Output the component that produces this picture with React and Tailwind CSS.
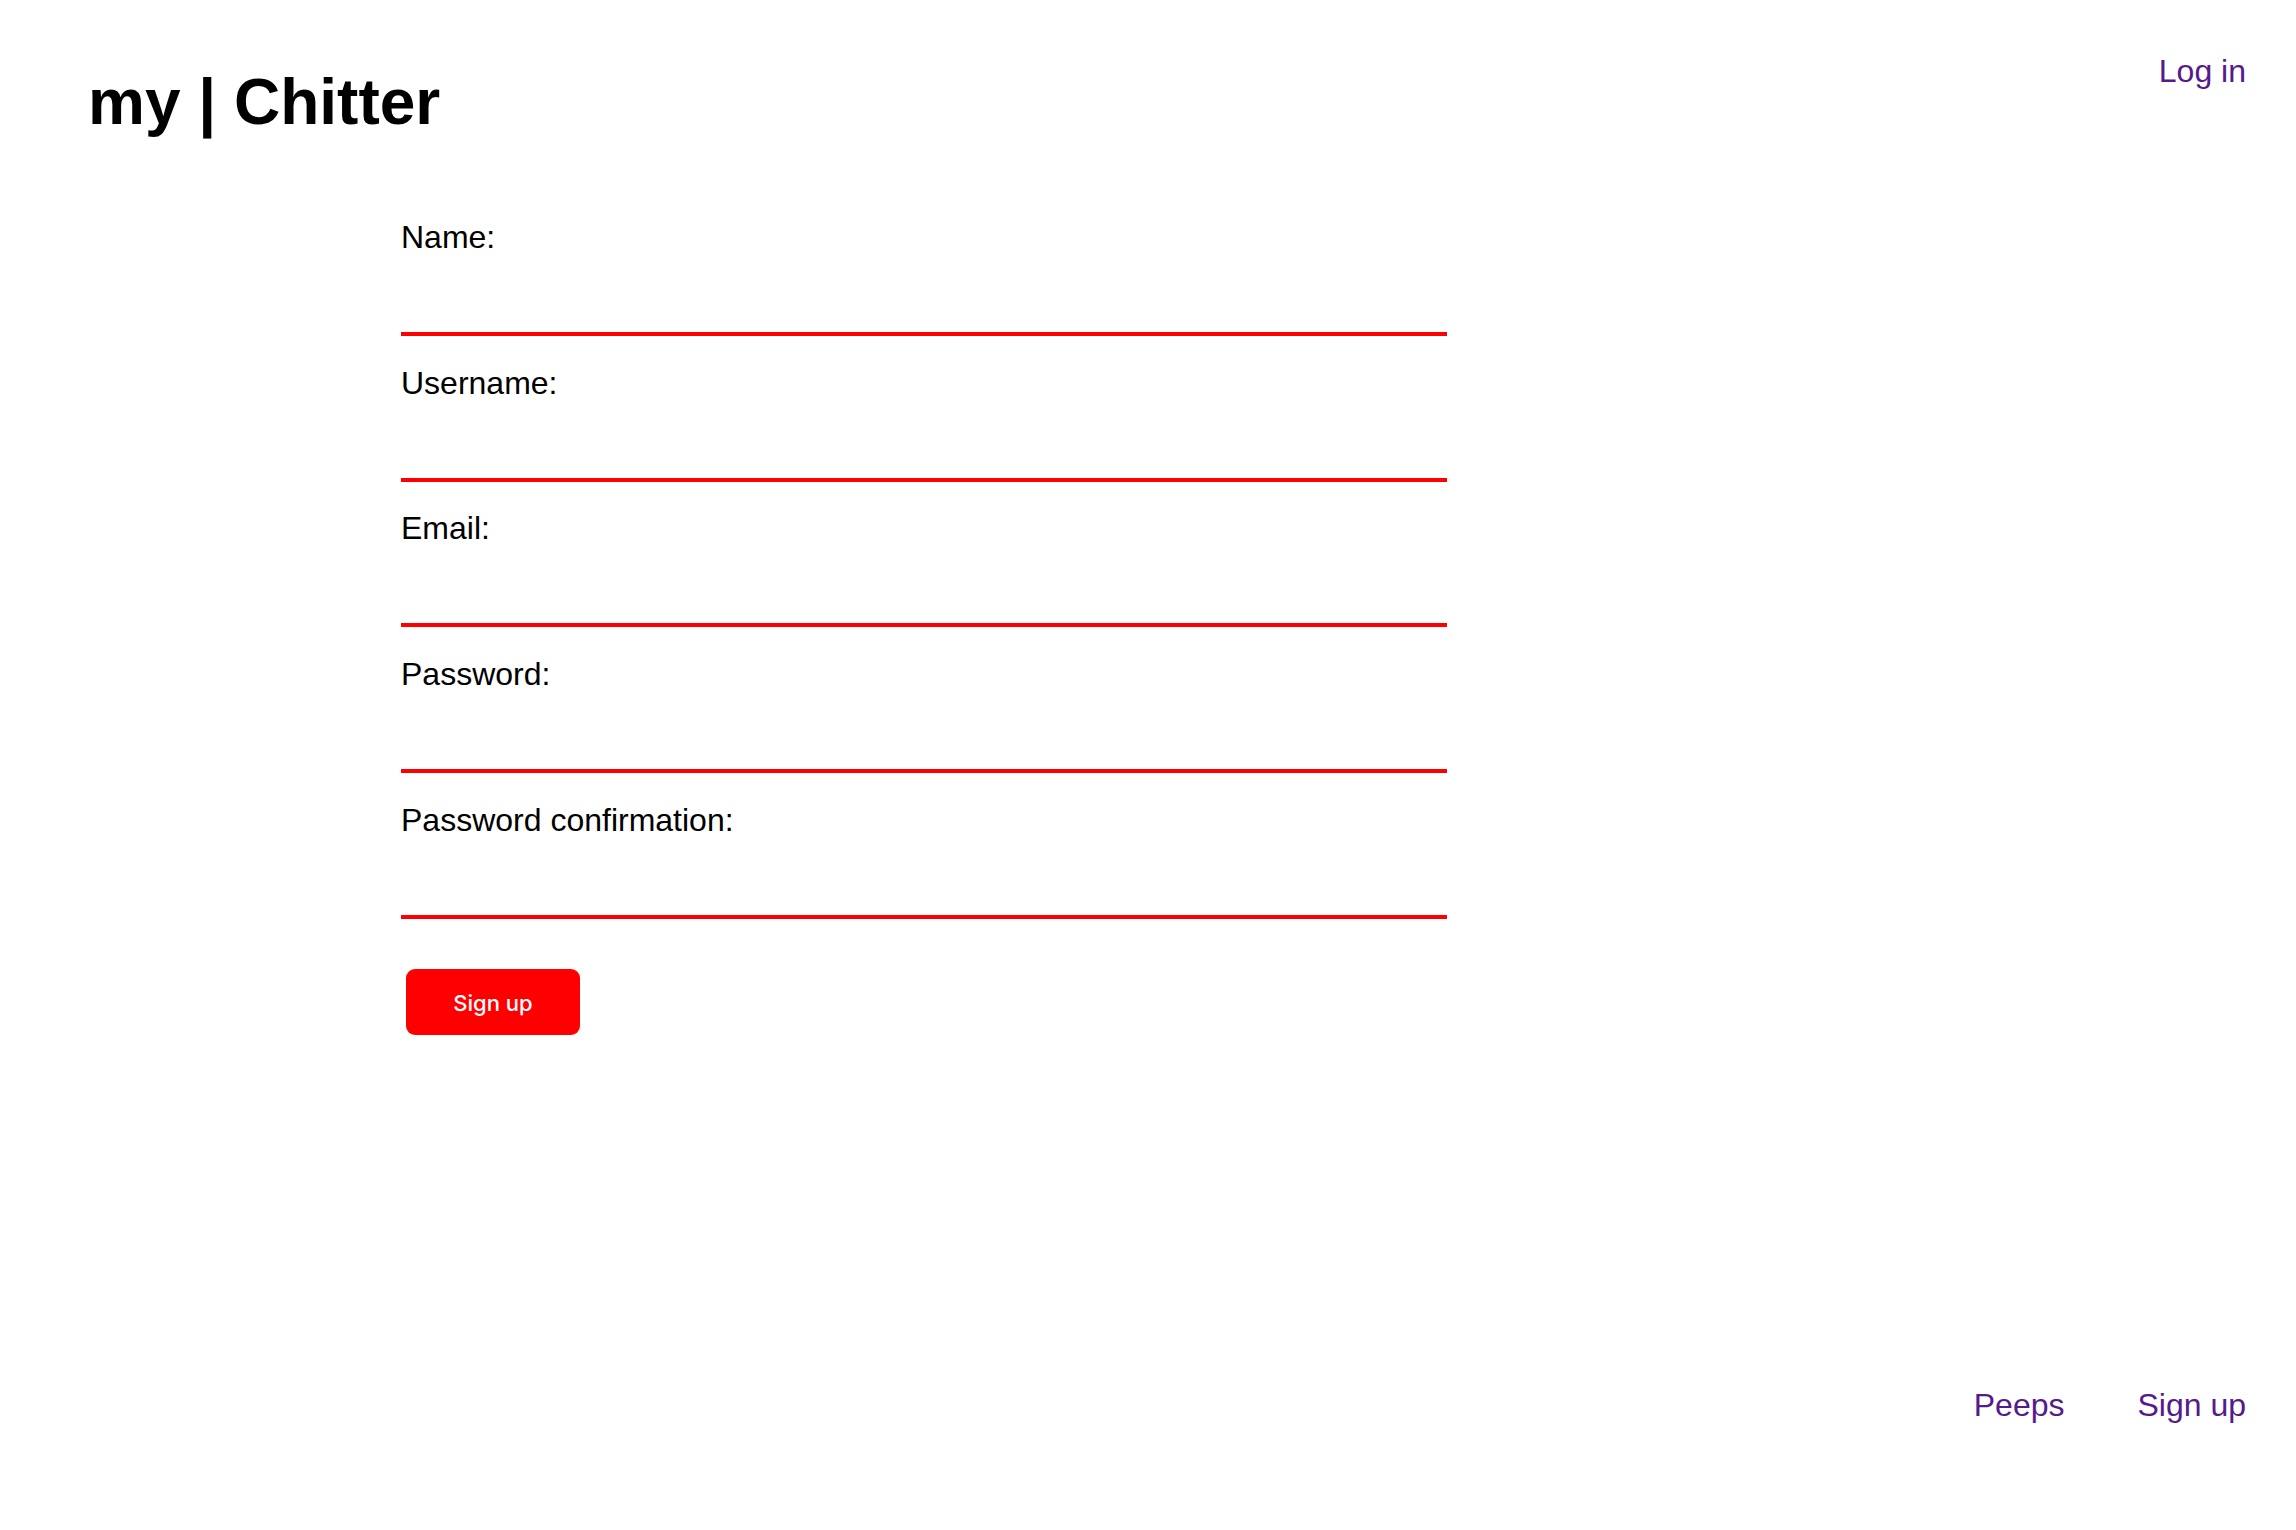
import React from 'react';

const fields = ['Name:', 'Username:', 'Email:', 'Password:', 'Password confirmation:'];

const Field = ({ label }) => {
  return (
    <label className="flex flex-col">
      <span className="block h-[37px] text-[32px] leading-[37px] text-black">{label}</span>
      <input
        type={label.startsWith('Password') ? 'password' : 'text'}
        className="h-[80px] w-full border-b-4 border-[#ff0000] bg-transparent text-[32px] outline-none"
      />
    </label>
  );
};

const App = () => {
  return (
    <div className="min-h-screen w-full flex flex-col bg-white font-['Liberation_Sans',Arial,sans-serif]">
      {/* Header */}
      <header className="flex items-start justify-between">
        <h1 className="ml-[88px] mt-[70px] text-[64px] leading-none font-bold text-black">my | Chitter</h1>
        <a href="#" className="mr-[50px] mt-[53px] text-[32px] leading-[37px] text-[#551a8b]">
          Log in
        </a>
      </header>

      {/* Sign up form */}
      <main className="flex-1">
        <form className="ml-[401px] mt-[85px] w-[1046px] flex flex-col gap-[28.7px]">
          {fields.map((f) => (
            <Field key={f} label={f} />
          ))}
        </form>
        <button className="ml-[406px] mt-[50px] w-[174px] h-[66px] rounded-[9px] bg-[#ff0000] text-white text-[22px] font-medium font-['Inter',sans-serif]">
          <span className="relative top-[2px]">Sign up</span>
        </button>
      </main>

      {/* Footer nav */}
      <footer className="flex justify-end gap-[73px] pr-[50px] pb-[106px]">
        <a href="#" className="text-[32px] leading-[37px] text-[#551a8b]">Peeps</a>
        <a href="#" className="text-[32px] leading-[37px] text-[#551a8b]">Sign up</a>
      </footer>
    </div>
  );
};

export default App;
